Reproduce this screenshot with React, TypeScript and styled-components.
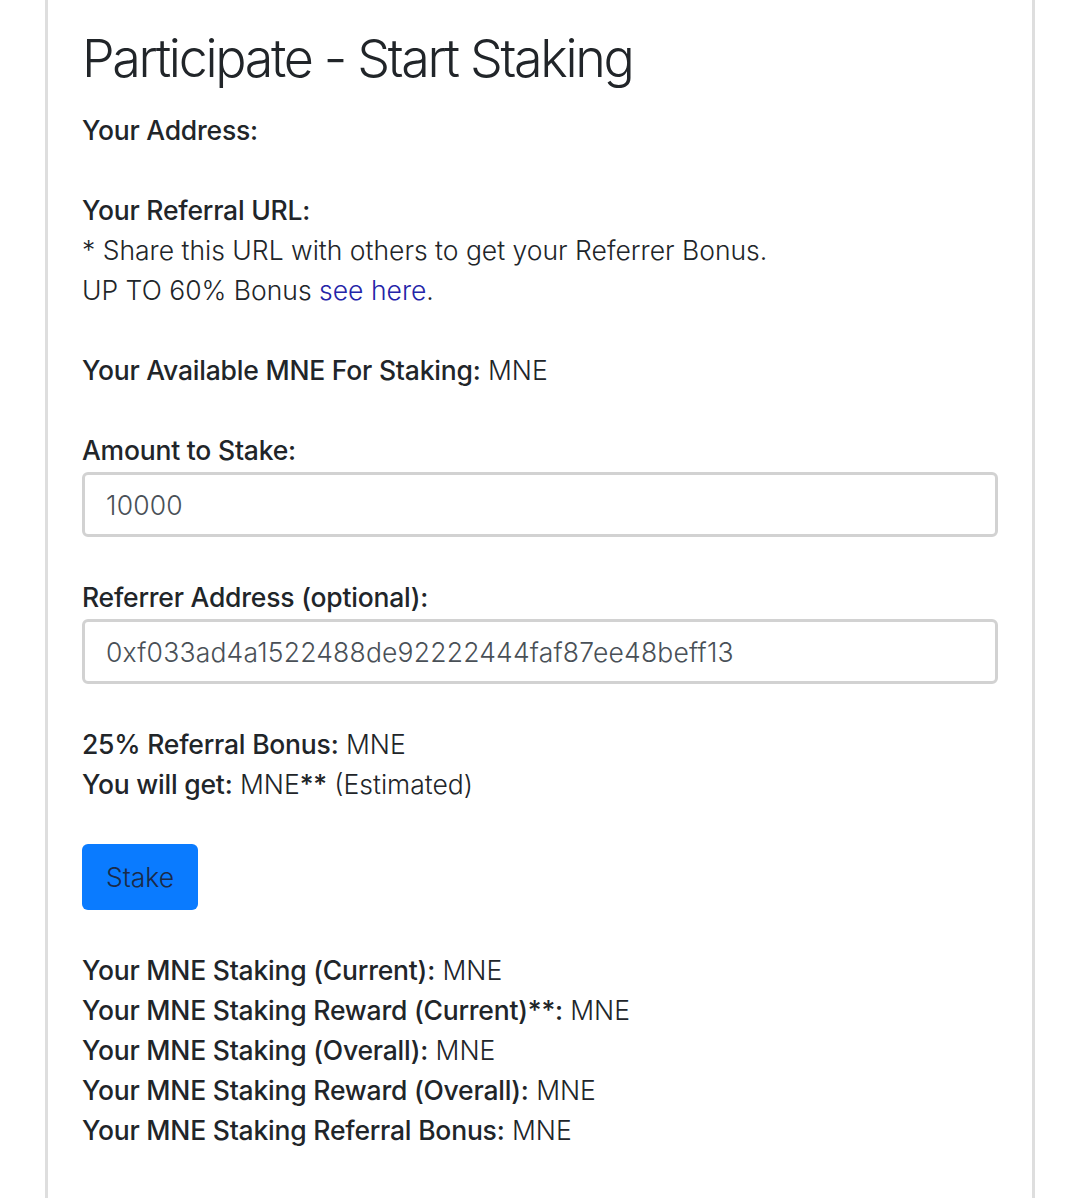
import styled, { createGlobalStyle } from 'styled-components';

const GlobalStyle = createGlobalStyle`
  body {
    margin: 0;
    background: #fff;
    font-family: 'Inter', 'Noto Sans', sans-serif;
    color: #212529;
  }
`;

const Card = styled.div`
  margin: 0 45px;
  min-height: 1198px;
  box-sizing: border-box;
  border-left: 3px solid #dedede;
  border-right: 3px solid #dedede;
  padding: 27px 34px 40px;
  display: flex;
  flex-direction: column;
`;

const Title = styled.h2`
  margin: 0 0 19px;
  font-size: 52px;
  line-height: 64px;
  font-weight: 300;
  letter-spacing: -0.045em;
`;

const Block = styled.div`
  display: flex;
  flex-direction: column;
  margin-bottom: 40px;
`;

const Line = styled.div`
  font-size: 26.5px;
  line-height: 40px;
  font-weight: 300;
  white-space: nowrap;
`;

const Label = styled.span`
  font-weight: 500;
  letter-spacing: -0.008em;
`;

const Link = styled.a`
  color: #2424a8;
  text-decoration: none;
`;

const Field = styled.input`
  margin-top: 2px;
  height: 65px;
  box-sizing: border-box;
  width: 100%;
  padding: 0 21px;
  border: 3px solid #d2d2d2;
  border-radius: 6px;
  font-family: 'Inter', 'Noto Sans', sans-serif;
  font-size: 26.5px;
  font-weight: 300;
  letter-spacing: 0.2px;
  color: #495057;
  outline: none;
`;

const Button = styled.button`
  align-self: flex-start;
  height: 66px;
  padding: 0 24px;
  border: none;
  border-radius: 6px;
  background: #0a7bff;
  color: #1b2a47;
  font-family: 'Inter', 'Noto Sans', sans-serif;
  font-size: 26.5px;
  font-weight: 300;
  cursor: pointer;
`;

const stats = [
  'Your MNE Staking (Current):',
  'Your MNE Staking Reward (Current)**:',
  'Your MNE Staking (Overall):',
  'Your MNE Staking Reward (Overall):',
  'Your MNE Staking Referral Bonus:',
];

const App = () => {
  return (
    <>
      <GlobalStyle />
      <Card>
        <Title>Participate - Start Staking</Title>
        <Block>
          <Line><Label>Your Address:</Label></Line>
        </Block>
        <Block>
          <Line><Label>Your Referral URL:</Label></Line>
          <Line>* Share this URL with others to get your Referrer Bonus.</Line>
          <Line>UP TO 60% Bonus <Link href="#">see here</Link>.</Line>
        </Block>
        <Block>
          <Line><Label>Your Available MNE For Staking:</Label> MNE</Line>
        </Block>
        <Block>
          <Line><Label>Amount to Stake:</Label></Line>
          <Field type="text" defaultValue="10000" />
        </Block>
        <Block>
          <Line><Label>Referrer Address (optional):</Label></Line>
          <Field type="text" defaultValue="0xf033ad4a1522488de92222444faf87ee48beff13" />
        </Block>
        <Block>
          <Line><Label>25% Referral Bonus:</Label> MNE</Line>
          <Line><Label>You will get:</Label> MNE<Label>**</Label> (Estimated)</Line>
        </Block>
        <Block>
          <Button type="button">Stake</Button>
        </Block>
        <Block>
          {stats.map((s) => (
            <Line key={s}><Label>{s}</Label> MNE</Line>
          ))}
        </Block>
      </Card>
    </>
  );
};

export default App;
